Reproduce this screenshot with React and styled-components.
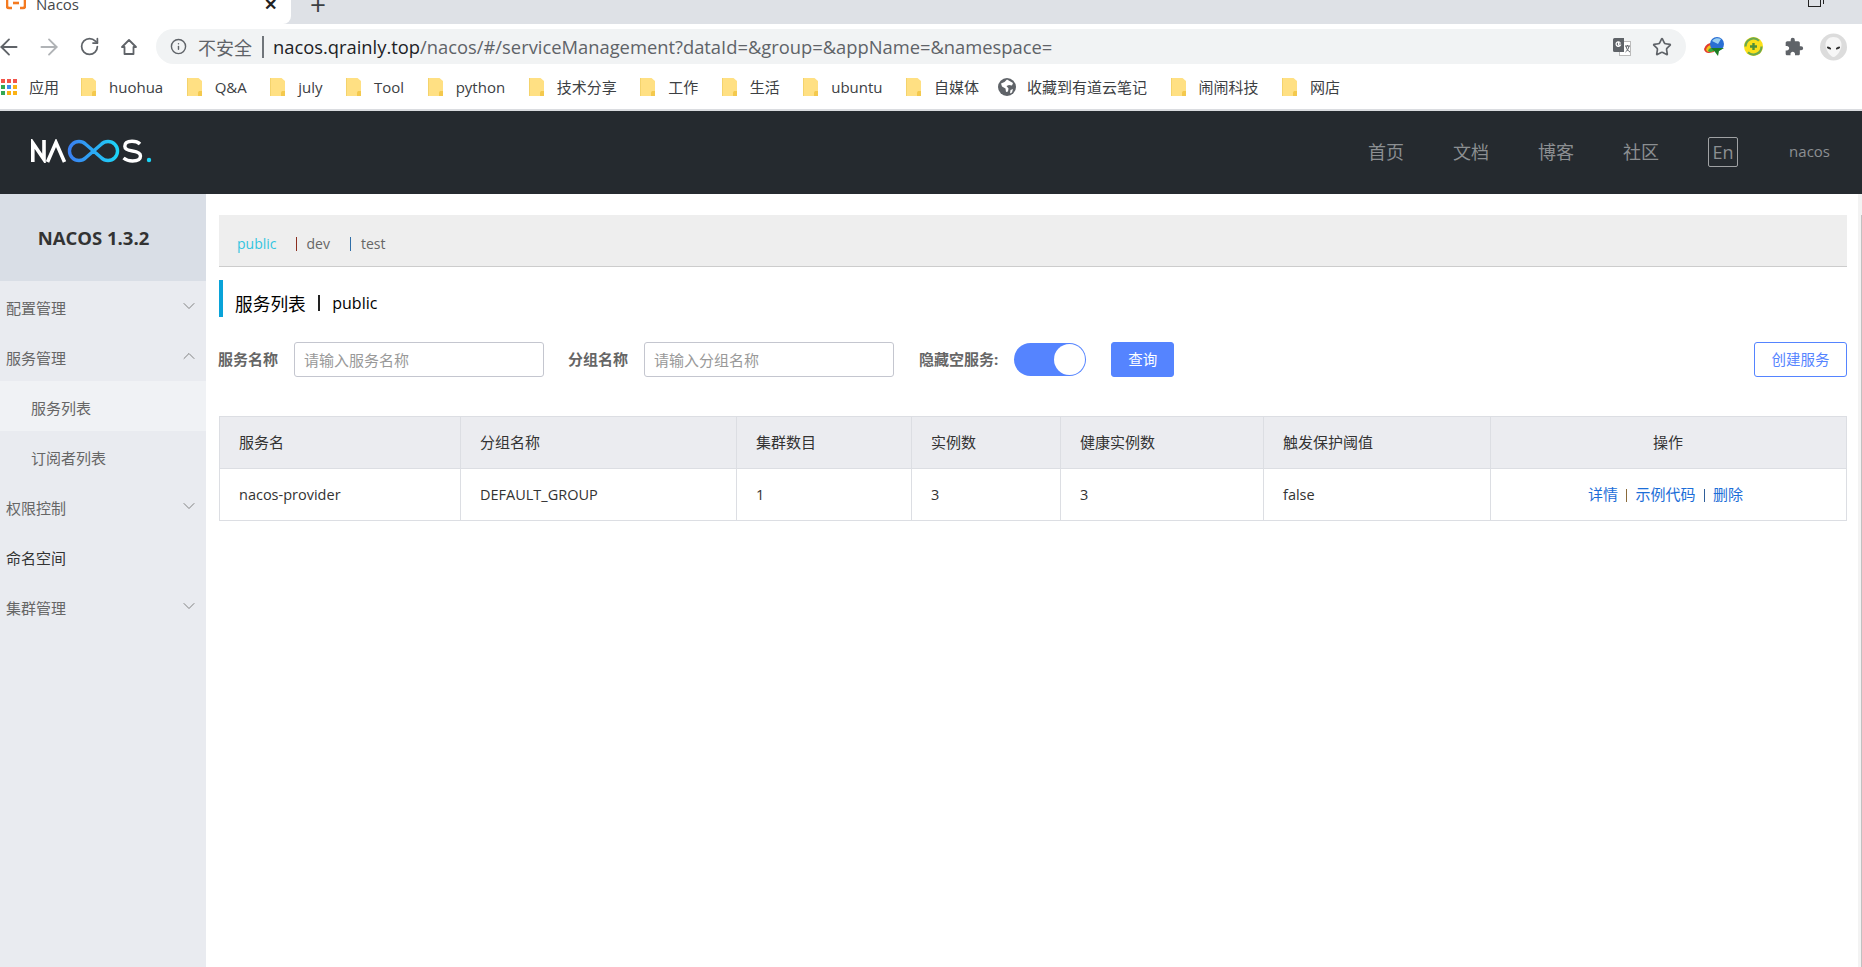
import React from "react";
import styled, { createGlobalStyle } from "styled-components";
import { ArrowLeft, ArrowRight, RotateCw, Info, Star, ChevronDown, ChevronUp } from "lucide-react";
import { MdExtension } from "react-icons/md";

const UI_FONT = `"Open Sans", "Noto Sans CJK SC", sans-serif`;

const GlobalStyle = createGlobalStyle`
  html, body {
    margin: 0;
    padding: 0;
    height: 100%;
    background: #fff;
    overflow: hidden;
    font-family: ${UI_FONT};
  }
  * { box-sizing: border-box; }
`;

const Page = styled.div`
  width: 1862px;
  height: 967px;
  display: flex;
  flex-direction: column;
  overflow: hidden;
`;

/* browser chrome */
const TabStrip = styled.div`
  height: 24px;
  flex: none;
  background: #dee1e6;
  display: flex;
  align-items: center;
  overflow: hidden;
`;

const ActiveTab = styled.div`
  width: 291px;
  height: 24px;
  background: #fff;
  border-bottom-right-radius: 8px;
  display: flex;
  align-items: flex-start;
  padding-left: 6px;
`;

const TabTitle = styled.span`
  font-size: 15px;
  line-height: 20px;
  margin: -6px 0 0 10px;
  color: #44474a;
  flex: 1;
`;

const TabClose = styled.span`
  font-size: 16px;
  font-weight: 700;
  line-height: 16px;
  margin: -4px 14px 0 0;
  color: #222;
`;

const NewTab = styled.span`
  font-size: 28px;
  line-height: 20px;
  margin: -16px 0 0 19px;
  color: #3c4043;
  align-self: center;
`;

const StripSpacer = styled.div`
  flex: 1;
`;

const WindowBtn = styled.div`
  position: relative;
  width: 13px;
  height: 7px;
  margin: -17px 41px 0 0;
  border: 1.5px solid #222;
  border-top: none;

  &::after {
    content: "";
    position: absolute;
    top: 0;
    right: -3.5px;
    width: 2px;
    height: 4px;
    border-right: 1.5px solid #222;
  }
`;

const Toolbar = styled.div`
  height: 46px;
  flex: none;
  display: flex;
  align-items: center;
  padding-bottom: 1px;
  background: #fff;
`;

const NavIcons = styled.div`
  width: 156px;
  flex: none;
  display: grid;
  grid-template-columns: repeat(4, 40px);
  justify-items: center;
  align-items: center;
  margin-left: -11px;
  margin-right: 11px;
  color: #5f6368;
`;

const AddressBar = styled.div`
  width: 1530px;
  height: 35px;
  flex: none;
  border-radius: 18px;
  background: #f1f3f4;
  display: flex;
  align-items: center;
  padding: 0 14px;
  font-size: 18.35px;
  color: #5f6368;
`;

const Insecure = styled.span`
  font-size: 18px;
  margin-left: 11px;
  color: #5f6368;
`;

const UrlDivider = styled.span`
  width: 1.5px;
  height: 22px;
  background: #70757a;
  margin: 0 9.5px 0 10px;
`;

const UrlHost = styled.span`
  color: #202124;
`;

const UrlPath = styled.span`
  flex: 1;
  white-space: nowrap;
`;

const StarSlot = styled.span`
  display: flex;
  margin-left: 21px;
`;

const ExtIcons = styled.div`
  flex: 1;
  display: flex;
  align-items: center;
  padding-left: 17px;
`;

const ExtSlot = styled.span`
  display: flex;
  margin-left: ${(props) => props.$left || 0}px;
  color: #5f6368;
`;

const Bookmarks = styled.div`
  height: 41px;
  flex: none;
  display: flex;
  align-items: center;
  padding: 0 0 6px 1px;
  border-bottom: 2px solid #dadce0;
  background: #fff;
`;

const Bookmark = styled.div`
  display: flex;
  align-items: center;
  gap: ${(props) => props.$gap || 13}px;
  margin-right: ${(props) => props.$right || 23.5}px;
  font-size: 15px;
  color: #3c4043;
  white-space: nowrap;
`;

/* app header */
const NavBar = styled.header`
  height: 83px;
  flex: none;
  background: #252a2f;
  display: flex;
  align-items: center;
  padding: 0 32px 0 30px;
`;

const LogoWrap = styled.div`
  flex: 1;
  display: flex;
  margin-top: -3px;
`;

const NavLink = styled.span`
  font-size: 18px;
  color: #8c8f92;
  margin-right: 49px;
  margin-top: -3px;
`;

const LangBox = styled.span`
  width: 30px;
  height: 30px;
  border: 1px solid #a0a2a4;
  border-radius: 2px;
  font-size: 18px;
  color: #8c8f92;
  display: flex;
  align-items: center;
  justify-content: center;
  margin: -1px 51px 0 0;
`;

const UserName = styled.span`
  font-size: 15px;
  color: #8c8f92;
  margin-top: -3px;
`;

/* page body */
const Body = styled.div`
  flex: 1;
  display: flex;
  min-height: 0;
`;

const Sidebar = styled.aside`
  width: 206px;
  flex: none;
  background: #e9ebf0;
`;

const VersionTitle = styled.div`
  height: 87px;
  background: #d9dee6;
  display: flex;
  align-items: center;
  justify-content: center;
  font-size: 18.5px;
  font-weight: 700;
  color: #333;
  padding: 0 19px 1px 0;
`;

const MenuItem = styled.div`
  height: 50px;
  display: flex;
  align-items: center;
  justify-content: space-between;
  padding: 2px 7px 0 ${(props) => (props.$sub ? 31 : 6)}px;
  font-size: 15px;
  color: ${(props) => (props.$dark ? "#333" : "#666")};
  background: ${(props) => (props.$active ? "#f0f2f5" : "transparent")};

  svg {
    margin-top: -2px;
    color: #777;
  }
`;

const Main = styled.main`
  flex: 1;
  min-width: 0;
  padding: 21px 11px 0 13px;
`;

const ScrollTrack = styled.div`
  width: 4px;
  flex: none;
  background: #f3f3f3;
  padding: 21px 0 0 3px;
`;

const ScrollThumb = styled.div`
  height: 100%;
  background: #c1c1c1;
`;

const NamespaceBar = styled.div`
  height: 52px;
  background: #eee;
  border-bottom: 1px solid #ccc;
  display: flex;
  align-items: center;
  padding: 6px 0 0 18px;
  font-size: 14px;
  color: #666;
`;

const NamespaceLink = styled.span`
  color: ${(props) => (props.$active ? "#33c5e0" : "#666")};
  margin-right: ${(props) => props.$gap}px;
`;

const NamespaceDivider = styled.span`
  width: 1px;
  height: 14px;
  background: ${(props) => props.color};
  margin-right: 10px;
`;

const PageTitle = styled.div`
  height: 37px;
  margin-top: 13px;
  border-left: 4px solid #09a3d9;
  padding: 8px 0 0 12px;
  display: flex;
  align-items: center;
  font-size: 17.7px;
  color: #000;
`;

const TitleLatin = styled.span`
  font-size: 16px;
`;

const TitleDivider = styled.span`
  width: 2px;
  height: 16px;
  background: #222;
  margin: 0 12.5px 0 12px;
`;

const FilterRow = styled.div`
  display: flex;
  align-items: center;
  margin: 25px 0 0 -1px;
  height: 35px;
`;

const FieldLabel = styled.label`
  font-size: 15px;
  font-weight: 700;
  color: #666;
  white-space: nowrap;
  margin: -3px ${(props) => props.$gap}px 0 0;
`;

const TextInput = styled.input`
  width: 250px;
  height: 35px;
  border: 1px solid #c4c6cf;
  border-radius: 3px;
  padding: 0 9px;
  margin-right: ${(props) => props.$right}px;
  font-size: 15px;
  font-family: ${UI_FONT};
  outline: none;

  &::placeholder {
    color: #999;
  }
`;

const Toggle = styled.div`
  width: 72px;
  height: 33px;
  margin-right: 25px;
  border-radius: 17px;
  background: #5584ff;
  display: flex;
  justify-content: flex-end;
  align-items: center;
  padding-right: 1px;
`;

const ToggleKnob = styled.span`
  width: 31px;
  height: 31px;
  border-radius: 50%;
  background: #fff;
`;

const Button = styled.button`
  height: 35px;
  border-radius: 3px;
  border: 1px solid #5584ff;
  background: ${(props) => (props.$primary ? "#5584ff" : "#fff")};
  color: ${(props) => (props.$primary ? "#fff" : "#5584ff")};
  width: ${(props) => props.$width}px;
  font-size: 14.5px;
  font-family: ${UI_FONT};
  padding: 0 0 2px;
  margin-left: ${(props) => (props.$push ? "auto" : "0")};
`;

const Table = styled.table`
  width: 100%;
  margin-top: 39px;
  border-collapse: collapse;
  table-layout: fixed;
  font-size: 14.5px;
  color: #333;
`;

const HeadCell = styled.th`
  height: 52px;
  background: #ebecf0;
  border: 1px solid #dcdee3;
  font-size: 15px;
  font-weight: 400;
  padding: 0 20px 2px 19px;
  text-align: ${(props) => props.$align || "left"};
`;

const Cell = styled.td`
  height: 52px;
  border: 1px solid #dcdee3;
  padding: 0 20px 0 19px;
  text-align: left;
`;

const ActionCell = styled(Cell)`
  text-align: center;
  font-size: 15px;
  padding: 0 26px 2px 20px;
`;

const ActionLink = styled.a`
  color: #1c6ed8;
  text-decoration: none;
`;

const ActionDivider = styled.span`
  display: inline-block;
  width: 1.5px;
  height: 13px;
  background: ${(props) => props.color};
  margin: 0 8px;
  vertical-align: -2px;
`;

const FolderIcon = () => (
  <svg width="15" height="18" viewBox="0 0 15 18">
    <path d="M1 0h10.5L15 3v14a1 1 0 0 1-1 1H1a1 1 0 0 1-1-1V1a1 1 0 0 1 1-1z" fill="#ffe083" />
    <path d="M11 18v-3.5c0-.8 1-1.5 1.8-1.5S14 13 15 13v5z" fill="#f4c94d" />
    <path d="M0 0h1v18H0z" fill="#f4d36c" />
  </svg>
);

const AppsIcon = () => {
  const colors = ["#f2544a", "#f2544a", "#f2544a", "#34a853", "#3b8cf0", "#fbb215", "#34a853", "#fbb215", "#fbb215"];
  return (
    <svg width="16" height="16" viewBox="0 0 16 16">
      {colors.map((color, index) => (
        <rect key={index} x={(index % 3) * 6} y={Math.floor(index / 3) * 6} width="4" height="4" fill={color} />
      ))}
    </svg>
  );
};

const TabIcon = () => (
  <svg width="20" height="24" viewBox="0 0 20 24" style={{ display: "block" }}>
    <path d="M6-3H3a2 2 0 0 0-2 2v7a2 2 0 0 0 2 2h3M14-3h3a2 2 0 0 1 2 2v7a2 2 0 0 1-2 2h-3" fill="none" stroke="#f47a20" strokeWidth="2.6" />
    <path d="M7 3h6" stroke="#f47a20" strokeWidth="2.6" />
  </svg>
);

const HomeIcon = () => (
  <svg width="18" height="18" viewBox="0 0 18 18" fill="none" stroke="#5f6368" strokeWidth="1.8">
    <path d="M9 2 2 9h2.5v7h9V9H16z" strokeLinejoin="round" />
  </svg>
);

const GlobeIcon = () => (
  <svg width="18" height="18" viewBox="0 0 18 18">
    <circle cx="9" cy="9" r="9" fill="#5f6368" />
    <path d="M9 1.5 6.5 4 3 5.5l1 3 3.5 2 .5 3.500 2-.5.5-3-2-2.500 2.500-1 3 .5L15 5z M12.500 12l2.500-1-1 3.500-2 1z" fill="#fff" />
  </svg>
);

const TranslateIcon = () => (
  <svg width="18" height="18" viewBox="0 0 18 18">
    <rect x="6.5" y="3.5" width="11" height="14" fill="#fff" stroke="#bbb" />
    <path d="M0 1.5A1.5 1.5 0 0 1 1.5 0H11v14H1.5A1.5 1.5 0 0 1 0 12.500z" fill="#5f6368" />
    <path d="M8 5H5.500v2H7.500a2.300 2.300 0 1 1-.8-2.800" fill="none" stroke="#fff" strokeWidth="1.2" />
    <path d="M12 8h5M14.500 7v1M13 8c.5 3 2 5 4 6M16 8c-.5 3-2 5-3.500 6" fill="none" stroke="#5f6368" strokeWidth="1" />
  </svg>
);

const DownloadIcon = () => (
  <svg width="22" height="20" viewBox="0 0 22 20">
    <path d="M1 12a8 8 0 0 1 9-6l1 9-5 1a5 5 0 0 1-5-4z" fill="#e23b2e" />
    <path d="M3 13a6 6 0 0 1 7-5l1 6-4 1a4 4 0 0 1-4-2z" fill="#f2c21a" />
    <path d="M5 14a4 4 0 0 1 5-3l1 3-3 1a3 3 0 0 1-3-1z" fill="#3aa83c" />
    <circle cx="14" cy="7" r="7" fill="#2a6fd4" />
    <path d="M9 4a7 7 0 0 1 9-2l-3 5z" fill="#9cd0f2" />
    <path d="M8 11h13l-5 3-1 5-3-4z" fill="#1c7d22" />
  </svg>
);

const SyncIcon = () => (
  <svg width="19" height="19" viewBox="0 0 19 19">
    <circle cx="9.500" cy="9.500" r="9.500" fill="#fbe019" />
    <path d="M1.500 9.500a8 8 0 0 1 13.500-5.800M17.500 9.500a8 8 0 0 1-13.500 5.800" fill="none" stroke="#6aa84f" strokeWidth="2.2" />
    <path d="M9.500 6v7M6 9.500h7" stroke="#4f8f3a" strokeWidth="2.400" />
  </svg>
);

const AvatarIcon = () => (
  <svg width="27" height="28" viewBox="0 0 27 28">
    <circle cx="13.500" cy="14" r="13.500" fill="#dcdcdc" />
    <path d="M13.500 4c5 0 8 3.500 8 8 0 5-5 12-8 12s-8-7-8-12c0-4.500 3-8 8-8z" fill="#f6f6f6" />
    <ellipse cx="9" cy="15" rx="2.300" ry="1.100" transform="rotate(25 9 15)" fill="#333" />
    <ellipse cx="18" cy="15" rx="2.300" ry="1.100" transform="rotate(-25 18 15)" fill="#333" />
  </svg>
);

const NacosLogo = () => (
  <svg width="122" height="24" viewBox="0 0 122 24" fill="none">
    <defs>
      <linearGradient id="nacosLoop" x1="0" y1="0" x2="1" y2="0">
        <stop offset="0" stopColor="#3a80f2" />
        <stop offset="1" stopColor="#1dd4f7" />
      </linearGradient>
    </defs>
    <path d="M2.800 23V4L14 20.500V1" stroke="#fff" strokeWidth="3.600" />
    <path d="M17.500 23 26 3.500 34.500 23" stroke="#fff" strokeWidth="3.600" />
    <path
      d="M55.700 5.300 71.300 18.700A9.500 9.500 0 1 0 71.300 5.300L55.700 18.700A9.500 9.500 0 1 1 55.700 5.300z"
      stroke="url(#nacosLoop)"
      strokeWidth="3.400"
    />
    <path
      d="M110 5C108 3 105 2.200 102 2.200 97 2.200 94.800 4.500 94.800 7.200 94.800 10.500 98 11.400 102.500 12 107 12.700 110.500 14 110.500 17 110.500 20.500 107 22 102.500 22 99 22 96 21 93.500 19"
      stroke="#fff"
      strokeWidth="3.400"
    />
    <circle cx="119" cy="21" r="2.200" fill="#1dd4f7" />
  </svg>
);

const bookmarks = ["huohua", "Q&A", "july", "Tool", "python", "技术分享", "工作", "生活", "ubuntu"];
const bookmarksEnd = ["闹闹科技", "网店"];

const menu = [
  { label: "配置管理", arrow: "down" },
  { label: "服务管理", arrow: "up" },
  { label: "服务列表", sub: true, active: true },
  { label: "订阅者列表", sub: true },
  { label: "权限控制", arrow: "down" },
  { label: "命名空间", dark: true },
  { label: "集群管理", arrow: "down" },
];

const columns = [
  { title: "服务名", width: 241, value: "nacos-provider" },
  { title: "分组名称", width: 276, value: "DEFAULT_GROUP" },
  { title: "集群数目", width: 175, value: "1" },
  { title: "实例数", width: 149, value: "3" },
  { title: "健康实例数", width: 203, value: "3" },
  { title: "触发保护阈值", width: 227, value: "false" },
];

const App = () => {
  return (
    <Page>
      <GlobalStyle />
      <TabStrip>
        <ActiveTab>
          <TabIcon />
          <TabTitle>Nacos</TabTitle>
          <TabClose>✕</TabClose>
        </ActiveTab>
        <NewTab>+</NewTab>
        <StripSpacer />
        <WindowBtn />
      </TabStrip>

      <Toolbar>
        <NavIcons>
          <ArrowLeft size={26} strokeWidth={1.7} />
          <ArrowRight size={26} strokeWidth={1.7} color="#b0b3b6" />
          <RotateCw size={21} strokeWidth={2} />
          <HomeIcon />
        </NavIcons>
        <AddressBar>
          <Info size={17} strokeWidth={2} />
          <Insecure>不安全</Insecure>
          <UrlDivider />
          <UrlPath>
            <UrlHost>nacos.qrainly.top</UrlHost>/nacos/#/serviceManagement?dataId=&group=&appName=&namespace=
          </UrlPath>
          <TranslateIcon />
          <StarSlot>
            <Star size={20} strokeWidth={2} />
          </StarSlot>
        </AddressBar>
        <ExtIcons>
          <ExtSlot>
            <DownloadIcon />
          </ExtSlot>
          <ExtSlot $left={19}>
            <SyncIcon />
          </ExtSlot>
          <ExtSlot $left={21}>
            <MdExtension size={20} />
          </ExtSlot>
          <ExtSlot $left={16}>
            <AvatarIcon />
          </ExtSlot>
        </ExtIcons>
      </Toolbar>

      <Bookmarks>
        <Bookmark $gap={12} $right={22}>
          <AppsIcon />
          应用
        </Bookmark>
        {bookmarks.map((name) => (
          <Bookmark key={name}>
            <FolderIcon />
            {name}
          </Bookmark>
        ))}
        <Bookmark $right={19}>
          <FolderIcon />
          自媒体
        </Bookmark>
        <Bookmark $gap={11}>
          <GlobeIcon />
          收藏到有道云笔记
        </Bookmark>
        {bookmarksEnd.map((name) => (
          <Bookmark key={name}>
            <FolderIcon />
            {name}
          </Bookmark>
        ))}
      </Bookmarks>

      <NavBar>
        <LogoWrap>
          <NacosLogo />
        </LogoWrap>
        <NavLink>首页</NavLink>
        <NavLink>文档</NavLink>
        <NavLink>博客</NavLink>
        <NavLink>社区</NavLink>
        <LangBox>En</LangBox>
        <UserName>nacos</UserName>
      </NavBar>

      <Body>
        <Sidebar>
          <VersionTitle>NACOS 1.3.2</VersionTitle>
          {menu.map((item) => (
            <MenuItem key={item.label} $sub={item.sub} $active={item.active} $dark={item.dark}>
              {item.label}
              {item.arrow === "down" && <ChevronDown size={20} strokeWidth={1.1} />}
              {item.arrow === "up" && <ChevronUp size={20} strokeWidth={1.1} />}
            </MenuItem>
          ))}
        </Sidebar>

        <Main>
          <NamespaceBar>
            <NamespaceLink $active $gap={19}>public</NamespaceLink>
            <NamespaceDivider color="#8b2e1f" />
            <NamespaceLink $gap={20}>dev</NamespaceLink>
            <NamespaceDivider color="#2f6ea8" />
            <NamespaceLink>test</NamespaceLink>
          </NamespaceBar>

          <PageTitle>
            服务列表
            <TitleDivider />
            <TitleLatin>public</TitleLatin>
          </PageTitle>

          <FilterRow>
            <FieldLabel $gap={16}>服务名称</FieldLabel>
            <TextInput placeholder="请输入服务名称" $right={24} />
            <FieldLabel $gap={16}>分组名称</FieldLabel>
            <TextInput placeholder="请输入分组名称" $right={25} />
            <FieldLabel $gap={16}>隐藏空服务:</FieldLabel>
            <Toggle>
              <ToggleKnob />
            </Toggle>
            <Button $primary $width={63}>查询</Button>
            <Button $push $width={93}>创建服务</Button>
          </FilterRow>

          <Table>
            <colgroup>
              {columns.map((col) => (
                <col key={col.title} style={{ width: col.width }} />
              ))}
              <col />
            </colgroup>
            <thead>
              <tr>
                {columns.map((col) => (
                  <HeadCell key={col.title}>{col.title}</HeadCell>
                ))}
                <HeadCell $align="center">操作</HeadCell>
              </tr>
            </thead>
            <tbody>
              <tr>
                {columns.map((col) => (
                  <Cell key={col.title}>{col.value}</Cell>
                ))}
                <ActionCell>
                  <ActionLink>详情</ActionLink>
                  <ActionDivider color="#8a6a3a" />
                  <ActionLink>示例代码</ActionLink>
                  <ActionDivider color="#2f5f9a" />
                  <ActionLink>删除</ActionLink>
                </ActionCell>
              </tr>
            </tbody>
          </Table>
        </Main>
        <ScrollTrack>
          <ScrollThumb />
        </ScrollTrack>
      </Body>
    </Page>
  );
};

export default App;
